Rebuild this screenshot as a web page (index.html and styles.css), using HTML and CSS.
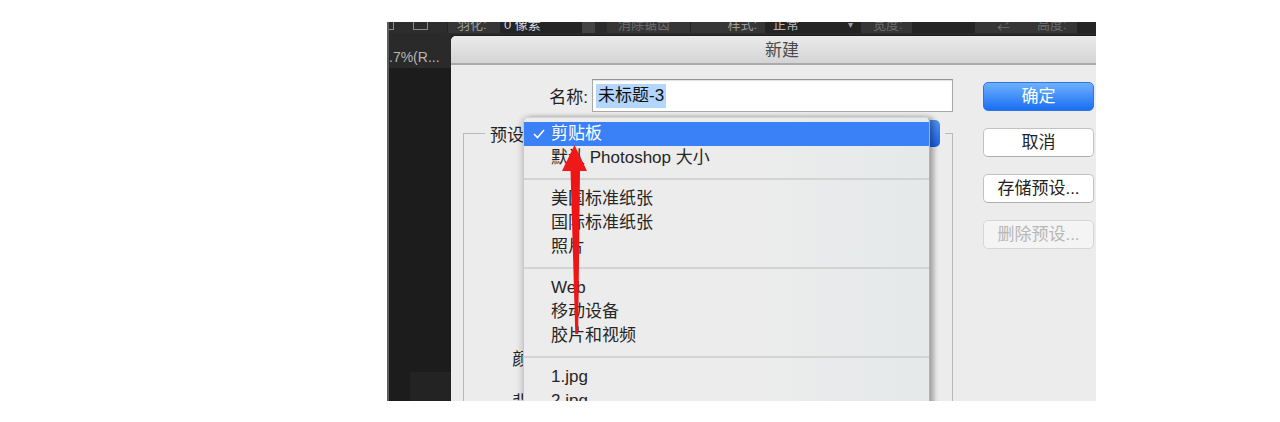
FILE: index.html
```html
<!DOCTYPE html>
<html lang="zh-CN">
<head>
<meta charset="utf-8">
<title>新建</title>
<link rel="stylesheet" href="styles.css">
</head>
<body>
<div class="shot">
  <div class="toolbar">
    <div class="tb-left">
      <span class="sq1"></span>
      <span class="sq2"></span>
    </div>
    <span class="tb-sep"></span>
    <span class="tb-item w52 pl9">羽化:</span>
    <span class="tb-box w82 val">0 像素</span>
    <span class="tb-gap w13"></span>
    <span class="tb-check"></span>
    <span class="tb-item w83 pl11 dim">消除锯齿</span>
    <span class="tb-sep"></span>
    <span class="tb-item w74 right">样式:</span>
    <span class="tb-box w95 val2">正常<span class="caret">▾</span></span>
    <span class="tb-sep"></span>
    <span class="tb-item w51 pl12 dim">宽度:</span>
    <span class="tb-box w63"></span>
    <span class="tb-item w62 pl22 dim">⇄</span>
    <span class="tb-item w40 dim">高度:</span>
    <span class="tb-sep"></span>
    <span class="tb-box grow"></span>
  </div>

  <div class="main">
    <aside class="side">
      <div class="doc-tab">.7%(R...</div>
      <div class="side-body"><div class="side-foot"></div></div>
    </aside>

    <section class="dialog">
      <header class="titlebar">新建</header>
      <div class="dlg-body">
        <div class="form">
          <div class="name-row">
            <label class="name-label">名称:</label>
            <div class="text-input"><span class="sel">未标题-3</span></div>
          </div>
          <fieldset class="group">
            <legend><div class="legend-row"><span class="legend-label">预设:</span><span class="popup"></span></div></legend>
            <div class="rows">
              <div class="row">大小:</div>
              <div class="row">宽度:</div>
              <div class="row">高度:</div>
              <div class="row">分辨率:</div>
              <div class="row">颜色模式:</div>
              <div class="row">背景内容:</div>
            </div>
          </fieldset>
        </div>
        <div class="buttons">
          <div class="btn primary">确定</div>
          <div class="btn">取消</div>
          <div class="btn">存储预设...</div>
          <div class="btn disabled">删除预设...</div>
        </div>
      </div>

      <div class="menu">
        <div class="item selected"><span class="check"><svg width="12" height="10" viewBox="0 0 12 10"><polyline points="1,5 4.5,8.5 11,1" fill="none" stroke="#fff" stroke-width="1.6"/></svg></span>剪贴板</div>
        <div class="item"><span class="check"></span>默认 Photoshop 大小</div>
        <div class="sep"></div>
        <div class="item"><span class="check"></span>美国标准纸张</div>
        <div class="item"><span class="check"></span>国际标准纸张</div>
        <div class="item"><span class="check"></span>照片</div>
        <div class="sep"></div>
        <div class="item"><span class="check"></span>Web</div>
        <div class="item"><span class="check"></span>移动设备</div>
        <div class="item"><span class="check"></span>胶片和视频</div>
        <div class="sep"></div>
        <div class="item"><span class="check"></span>1.jpg</div>
        <div class="item"><span class="check"></span>2.jpg</div>
      </div>
    </section>
  </div>

  <svg class="arrow" width="40" height="200" viewBox="0 0 40 200">
    <polygon points="15.5,30 25,30 23.2,194 20.3,194" fill="#ee1515"/>
    <polygon points="19.5,5 7,31 32,31" fill="#f01818"/>
  </svg>
</div>
</body>
</html>
```

FILE: styles.css
```css
* { box-sizing: border-box; margin: 0; padding: 0; }

body {
  background: #ffffff;
  font-family: "Liberation Sans", "Noto Sans CJK SC", sans-serif;
}

.shot {
  margin: 22px 0 0 387px;
  width: 709px;
  height: 379px;
  overflow: hidden;
  position: relative;
  display: flex;
  flex-direction: column;
  background: #1d1d1d;
  border-left: 2px solid #5e5e5e;
}

/* ---------- toolbar ---------- */
.toolbar {
  height: 13px;
  flex: none;
  display: flex;
  align-items: flex-end;
  background: #363636;
  border-bottom: 2px solid #2a2a2a;
  overflow: hidden;
  font-size: 13px;
  color: #9c9c9c;
  white-space: nowrap;
}
.tb-left {
  width: 58px;
  height: 11px;
  flex: none;
  display: flex;
  align-items: flex-start;
  background: #2d2d2d;
}
.sq1 {
  width: 5px;
  height: 8px;
  border-right: 1px solid #8c8c8c;
  border-bottom: 1px solid #8c8c8c;
}
.sq2 {
  margin-left: 19px;
  width: 15px;
  height: 8px;
  border: 1px solid #8c8c8c;
  border-top: none;
}
.tb-sep { width: 1px; height: 11px; flex: none; background: #242424; }
.tb-item {
  height: 16px;
  line-height: 16px;
  flex: none;
  overflow: hidden;
}
.tb-box {
  height: 16px;
  line-height: 16px;
  flex: none;
  background: #242424;
  overflow: hidden;
}
.tb-gap { height: 11px; flex: none; background: #444444; }
.tb-check { width: 12px; height: 11px; flex: none; background: #2b2b2b; }
.val { padding-left: 4px; color: #d3d9e8; }
.val2 { padding-left: 8px; color: #b9b9b9; display: flex; justify-content: space-between; padding-right: 7px; }
.caret { font-size: 10px; color: #a0a0a0; }
.dim { color: #6e6e6e; }
.right { text-align: right; padding-right: 8px; }
.grow { flex: 1; }
.w13 { width: 13px; } .w40 { width: 40px; } .w51 { width: 51px; } .w52 { width: 52px; }
.w62 { width: 62px; } .w63 { width: 63px; } .w74 { width: 74px; } .w82 { width: 82px; }
.w83 { width: 83px; } .w95 { width: 95px; }
.pl9 { padding-left: 9px; } .pl11 { padding-left: 11px; } .pl12 { padding-left: 12px; } .pl22 { padding-left: 22px; }

/* ---------- main ---------- */
.main { flex: 1; display: flex; min-height: 0; }

.side {
  width: 62px;
  flex: none;
  display: flex;
  flex-direction: column;
}
.doc-tab {
  height: 33px;
  background: #2a2a2a;
  color: #b6b6b6;
  font-size: 14px;
  line-height: 14px;
  padding-top: 15px;
  white-space: nowrap;
  overflow: hidden;
}
.side-body {
  flex: 1;
  background: #1c1c1c;
  display: flex;
  flex-direction: column;
  justify-content: flex-end;
}
.side-foot { margin-left: 21px; height: 29px; background: #232323; }

/* ---------- dialog ---------- */
.dialog {
  width: 662px;
  flex: none;
  margin-top: 1px;
  background: #ececec;
  border-radius: 5px 0 0 0;
  position: relative;
  overflow: hidden;
  color: #222;
  font-size: 17px;
}
.titlebar {
  height: 29px;
  padding-top: 2px;
  line-height: 25px;
  text-align: center;
  color: #4a4a4a;
  background: linear-gradient(#ebebeb, #d4d4d4);
  border-bottom: 2px solid #ababab;
}

.dlg-body { display: flex; padding-left: 12px; }

.form { width: 490px; flex: none; }
.name-row {
  margin-top: 14px;
  height: 33px;
  display: flex;
  align-items: center;
  gap: 4px;
}
.name-label { width: 125px; text-align: right; }
.text-input {
  width: 361px;
  height: 33px;
  background: #fff;
  border: 1px solid #a8a8a8;
  border-top-color: #939393;
  box-shadow: inset 0 1px 1px rgba(0,0,0,0.12);
  display: flex;
  align-items: center;
  padding-left: 3px;
}
.sel {
  background: #b3d6fd;
  line-height: 24px;
  padding: 0 2px;
  color: #111;
}

.group {
  margin-top: 8px;
  width: 490px;
  height: 400px;
  border: 1px solid #b9b9b9;
  border-bottom: none;
  padding: 0 0 0 21px;
}
.group legend { padding: 0 5px; }
.legend-row { display: flex; align-items: center; height: 27px; }
.legend-label { width: 33px; white-space: nowrap; overflow: hidden; }
.popup {
  width: 417px;
  height: 27px;
  border-radius: 5px;
  background: linear-gradient(#4f93fa, #1b5fe0);
}
.rows { margin-top: 19px; }
.row {
  width: 100px;
  height: 43px;
  line-height: 43px;
  text-align: right;
  white-space: nowrap;
}

.buttons {
  margin-left: 30px;
  margin-top: 17px;
  width: 111px;
  flex: none;
  display: flex;
  flex-direction: column;
  gap: 17px;
}
.btn {
  height: 29px;
  line-height: 27px;
  text-align: center;
  border-radius: 5px;
  border: 1px solid #c2c2c2;
  border-bottom-color: #aeaeae;
  background: #ffffff;
  color: #222;
  white-space: nowrap;
}
.primary {
  background: linear-gradient(#6db1fd, #1b6ef4);
  border-color: #2f74e6;
  color: #ffffff;
}
.disabled {
  background: #f4f4f4;
  border-color: #d6d6d6;
  color: #b7b7b7;
}

/* ---------- popup menu (overlay) ---------- */
.menu {
  position: absolute;
  left: 72px;
  top: 81px;
  width: 407px;
  height: 320px;
  padding-top: 4px;
  background: linear-gradient(to right, #ececec 55%, #e5e9ea);
  border-top: 1px solid #d6d6d6;
  border-left: 1px solid #c8c8c8;
  border-right: 1px solid #b0b0b0;
  border-radius: 5px 5px 0 0;
  box-shadow: 4px 0 5px rgba(0,0,0,0.3), -3px 0 5px rgba(0,0,0,0.12);
}
.item {
  height: 24px;
  line-height: 24px;
  display: flex;
  align-items: center;
  color: #262626;
  white-space: nowrap;
}
.check {
  width: 27px;
  flex: none;
  padding-left: 9px;
  display: flex;
  align-items: center;
}
.selected { background: #3a80f7; color: #ffffff; }
.sep {
  height: 17px;
  padding-top: 8px;
}
.sep::after {
  content: "";
  display: block;
  height: 2px;
  background: #d3d3d3;
}

/* ---------- annotation arrow (overlay) ---------- */
.arrow {
  position: absolute;
  left: 166px;
  top: 118px;
}
```
